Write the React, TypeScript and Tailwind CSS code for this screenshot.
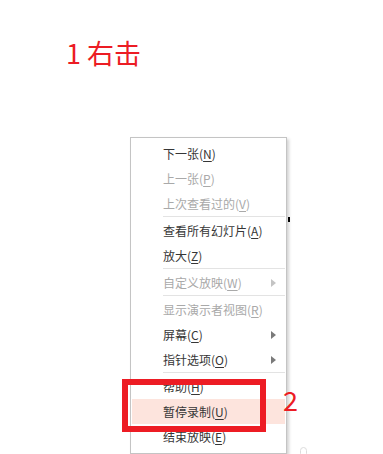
import React from "react"

type Item =
  | { sep: true }
  | { label: string; key: string; disabled?: boolean; sub?: boolean; active?: boolean; sep?: false }

const items: Item[] = [
  { label: "下一张", key: "N" },
  { label: "上一张", key: "P", disabled: true },
  { label: "上次查看过的", key: "V", disabled: true },
  { sep: true },
  { label: "查看所有幻灯片", key: "A" },
  { label: "放大", key: "Z" },
  { sep: true },
  { label: "自定义放映", key: "W", disabled: true, sub: true },
  { sep: true },
  { label: "显示演示者视图", key: "R", disabled: true },
  { label: "屏幕", key: "C", sub: true },
  { label: "指针选项", key: "O", sub: true },
  { sep: true },
  { label: "帮助", key: "H" },
  { label: "暂停录制", key: "U", active: true },
  { label: "结束放映", key: "E" },
]

function MenuRow({ item }: { item: Item }) {
  if (item.sep) {
    return (
      <div className="h-[2px] pl-[32px] pr-px">
        <div className="h-px bg-[#e3e3e3]" />
      </div>
    )
  }
  return (
    <div
      className={`mx-px flex h-[25px] items-center pl-[31px] pr-[8px] ${item.active ? "bg-[#fde4dd]" : ""} ${
        item.disabled ? "text-[#a9a9a9]" : "text-[#363636]"
      }`}
    >
      <span className="flex-1 whitespace-nowrap">
        {item.label}(<span className="underline underline-offset-2">{item.key}</span>)
      </span>
      {item.sub && (
        <svg width="5" height="8" viewBox="0 0 5 8" className="mr-[1px]">
          <path d="M0 0 L5 4 L0 8 Z" fill={item.disabled ? "#c4c4c4" : "#7a7a7a"} />
        </svg>
      )}
    </div>
  )
}

export default function App() {
  return (
    <div className="relative h-[454px] w-[383px] overflow-hidden bg-white font-['Noto_Sans_CJK_SC','Noto_Sans',sans-serif]">
      <div className="pl-[66px] pt-[39px] text-[27px] leading-none text-[#ec1c24]">1 右击</div>

      <div className="ml-[130px] mt-[71px] w-[157px] border border-[#c4c4c4] bg-white pt-[3px] pb-[4px] text-[12px] shadow-[2px_2px_3px_rgba(0,0,0,0.18)]">
        {items.map((it, i) => (
          <MenuRow key={i} item={it} />
        ))}
      </div>

      {/* pointer remnant */}
      <div className="absolute left-[288px] top-[217px] h-[5px] w-[2px] bg-black" />

      {/* annotation */}
      <div className="absolute left-[122px] top-[379px] h-[53px] w-[144px] border-[6px] border-[#ed1c24]" />
      <div className="absolute left-[283px] top-[386px] text-[27px] leading-none text-[#ec1c24]">2</div>

      <div className="absolute left-[300px] top-[447px] h-[10px] w-[7px] rounded-full border border-[#dcdcdc]" />
    </div>
  )
}
